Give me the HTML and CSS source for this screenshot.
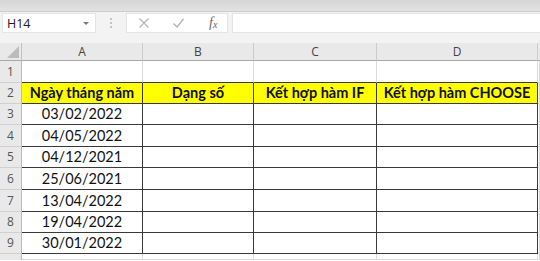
FILE: index.html
```html
<!DOCTYPE html>
<html lang="vi">
<head>
<meta charset="utf-8">
<title>Excel</title>
<link rel="stylesheet" href="styles.css">
</head>
<body>
<div class="app">
  <div class="ribbon"></div>
  <div class="fbar">
    <div class="namebox"><span class="ref">H14</span><span class="dd"></span></div>
    <div class="grip"><i></i><i></i><i></i></div>
    <div class="btns">
      <svg class="ic" width="12" height="12" viewBox="0 0 12 12"><path d="M1.5 1.5 L10.5 10.5 M10.5 1.5 L1.5 10.5" stroke="#b4b4b4" stroke-width="1.2" fill="none"/></svg>
      <svg class="ic" width="13" height="12" viewBox="0 0 13 12"><path d="M1.5 6.5 L5 10 L11.5 2" stroke="#b4b4b4" stroke-width="1.4" fill="none"/></svg>
      <span class="fx">f<sub>x</sub></span>
    </div>
    <div class="input"></div>
  </div>
  <div class="gap"></div>
  <div class="sheet">
    <div class="corner"><span class="tri"></span></div>
    <div class="ch">A</div><div class="ch">B</div><div class="ch">C</div><div class="ch">D</div><div class="ch last"></div>

    <div class="rh">1</div><div class="c top"></div><div class="c top"></div><div class="c top"></div><div class="c top"></div><div class="c"></div>

    <div class="rh">2</div><div class="c b y">Ngày tháng năm</div><div class="c b y">Dạng số</div><div class="c b y">Kết hợp hàm IF</div><div class="c b y">Kết hợp hàm CHOOSE</div><div class="c"></div>

    <div class="rh">3</div><div class="c b">03/02/2022</div><div class="c b"></div><div class="c b"></div><div class="c b"></div><div class="c"></div>
    <div class="rh">4</div><div class="c b">04/05/2022</div><div class="c b"></div><div class="c b"></div><div class="c b"></div><div class="c"></div>
    <div class="rh">5</div><div class="c b">04/12/2021</div><div class="c b"></div><div class="c b"></div><div class="c b"></div><div class="c"></div>
    <div class="rh">6</div><div class="c b">25/06/2021</div><div class="c b"></div><div class="c b"></div><div class="c b"></div><div class="c"></div>
    <div class="rh">7</div><div class="c b">13/04/2022</div><div class="c b"></div><div class="c b"></div><div class="c b"></div><div class="c"></div>
    <div class="rh">8</div><div class="c b">19/04/2022</div><div class="c b"></div><div class="c b"></div><div class="c b"></div><div class="c"></div>
    <div class="rh">9</div><div class="c b">30/01/2022</div><div class="c b"></div><div class="c b"></div><div class="c b"></div><div class="c"></div>
    <div class="rh"></div><div class="c"></div><div class="c"></div><div class="c"></div><div class="c"></div><div class="c"></div>
  </div>
</div>
</body>
</html>
```

FILE: styles.css
```css
* { box-sizing: border-box; }
html, body { margin: 0; padding: 0; }
body {
  width: 540px;
  height: 261px;
  overflow: hidden;
  background: #ffffff;
  font-family: Lato, "Liberation Sans", sans-serif;
}
.app { width: 540px; height: 261px; overflow: hidden; }

.ribbon {
  height: 12px;
  background: linear-gradient(#d6d6d6, #e2e2e2);
  border-bottom: 1px solid #cdcdcd;
}

.fbar {
  height: 22px;
  background: #f3f3f3;
  display: flex;
  align-items: stretch;
  padding-top: 1px;
  padding-bottom: 1px;
}
.namebox {
  margin-left: 2px;
  width: 94px;
  background: #fff;
  border: 1px solid #e4e4e4;
  display: flex;
  align-items: center;
  justify-content: space-between;
  padding: 0 6px 0 4px;
}
.ref {
  font-family: "Segoe UI", "Open Sans", "Noto Sans", sans-serif;
  font-size: 12.5px;
  color: #222;
}
.dd {
  width: 0; height: 0;
  border-left: 3px solid transparent;
  border-right: 3px solid transparent;
  border-top: 3px solid #7a7a7a;
}
.grip {
  width: 30px;
  display: flex;
  flex-direction: column;
  align-items: center;
  justify-content: center;
  gap: 2px;
}
.grip i {
  display: block;
  width: 2px; height: 2px;
  background: #c4c4c4;
}
.btns {
  width: 102px;
  background: #fff;
  border: 1px solid #e4e4e4;
  display: flex;
  align-items: center;
  padding-left: 11px;
  gap: 22px;
}
.fx {
  font-family: "Liberation Serif", "DejaVu Serif", serif;
  font-style: italic;
  font-size: 14px;
  color: #6a6a6a;
  margin-left: 2px;
}
.fx sub { font-size: 10px; vertical-align: -1px; }
.input {
  flex: 1;
  margin-left: 4px;
  background: #fff;
  border: 1px solid #e4e4e4;
  border-right: none;
}

.gap { height: 9px; background: #f3f3f3; }

.sheet {
  display: grid;
  grid-template-columns: 22px 121px 111px 123px 161px 1fr;
  grid-template-rows: 18px 22px 21px 21px 22px 21px 22px 22px 21px 21px 6px;
}
.sheet > div {
  border-right: 1px solid #dadada;
  border-bottom: 1px solid #dadada;
  overflow: hidden;
  white-space: nowrap;
}
.corner {
  background: #e9e9e9;
  border-right-color: #c2c2c2 !important;
  border-bottom-color: #a9a9a9 !important;
  position: relative;
}
.tri {
  position: absolute;
  right: 2px;
  bottom: 2px;
  width: 0; height: 0;
  border-left: 12px solid transparent;
  border-bottom: 12px solid #bcbcbc;
}
.sheet > .ch {
  background: #e9e9e9;
  border-right-color: #cbcbcb;
  border-bottom-color: #a9a9a9;
  font-family: "Segoe UI", "Open Sans", "Noto Sans", sans-serif;
  font-size: 12px;
  color: #444;
  text-align: center;
  line-height: 17px;
}
.sheet > .ch.last { border-right: none; }
.sheet > .rh {
  background: #e9e9e9;
  border-right-color: #bcbcbc;
  border-bottom-color: #d0d0d0;
  font-family: "Segoe UI", "Open Sans", "Noto Sans", sans-serif;
  font-size: 12px;
  color: #555;
  text-align: center;
  display: flex;
  align-items: flex-end;
  justify-content: center;
  padding-bottom: 2px;
}
.sheet > .c:last-child, .sheet > .rh:nth-last-child(6) { border-bottom: none; }
.c {
  font-size: 14.5px;
  color: #111;
  display: flex;
  align-items: flex-end;
  justify-content: center;
  padding-bottom: 1px;
  line-height: 18px;
}
.sheet > .top { border-bottom-color: #3a3a3a; }
.sheet > .b {
  border-right-color: #3a3a3a;
  border-bottom-color: #3a3a3a;
}
.y {
  background: #ffff00;
  font-weight: 700;
}
```
